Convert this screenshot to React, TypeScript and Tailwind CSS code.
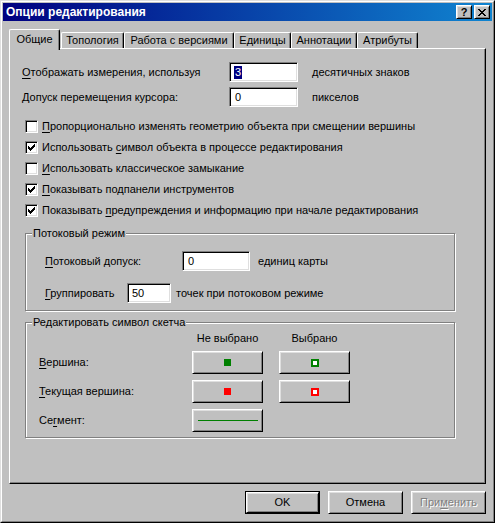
import React from "react";

const raised =
  "border border-t-white border-l-white border-r-black border-b-black shadow-[inset_1px_1px_0_#dfdfdf,inset_-1px_-1px_0_#808080] bg-[#c0c0c0]";
const sunken =
  "border border-t-[#808080] border-l-[#808080] border-r-white border-b-white shadow-[inset_1px_1px_0_#000,inset_-1px_-1px_0_#dfdfdf] bg-white";

function U({ children }: { children: React.ReactNode }) {
  return <span className="underline underline-offset-[2px] decoration-1">{children}</span>;
}

function CheckMark() {
  const r: [number, number, number][] = [
    [6, 0, 1],
    [5, 1, 2],
    [0, 2, 1],
    [4, 2, 3],
    [0, 3, 2],
    [3, 3, 3],
    [0, 4, 5],
    [1, 5, 3],
    [2, 6, 1],
  ];
  return (
    <svg
      className="absolute left-[2px] top-[2px]"
      width="7"
      height="7"
      viewBox="0 0 7 7"
      shapeRendering="crispEdges"
    >
      {r.map(([x, y, w], i) => (
        <rect key={i} x={x} y={y} width={w} height={1} fill="#000" />
      ))}
    </svg>
  );
}

function CloseGlyph() {
  const rows: [number, number][][] = [
    [[0, 2], [6, 2]],
    [[1, 2], [5, 2]],
    [[2, 4]],
    [[3, 2]],
    [[2, 4]],
    [[1, 2], [5, 2]],
    [[0, 2], [6, 2]],
  ];
  return (
    <svg width="8" height="7" viewBox="0 0 8 7" shapeRendering="crispEdges">
      {rows.map((row, y) =>
        row.map(([x, w], i) => <rect key={`${y}-${i}`} x={x} y={y} width={w} height={1} fill="#000" />)
      )}
    </svg>
  );
}

function Check({ checked, children }: { checked?: boolean; children: React.ReactNode }) {
  return (
    <div className="flex h-[21px] items-center">
      <div className={`relative h-[13px] w-[13px] ${sunken}`}>{checked && <CheckMark />}</div>
      <span className="ml-[4px] whitespace-nowrap">{children}</span>
    </div>
  );
}

function Group({
  title,
  className,
  children,
}: {
  title: string;
  className: string;
  children: React.ReactNode;
}) {
  return (
    <div
      className={`relative border border-[#808080] shadow-[inset_1px_1px_0_#fff,1px_1px_0_#fff] ${className}`}
    >
      <span className="absolute left-[6px] top-[-8px] bg-[#c0c0c0] px-[1px] leading-[14px] whitespace-nowrap">
        {title}
      </span>
      {children}
    </div>
  );
}

function Tab({ w, children }: { w: string; children: React.ReactNode }) {
  return (
    <div
      className={`flex h-[16px] items-center justify-center rounded-t-[2px] border-t border-l border-r border-t-white border-l-white border-r-black shadow-[inset_-1px_0_0_#808080] whitespace-nowrap ${w}`}
    >
      {children}
    </div>
  );
}

export default function App() {
  return (
    <div className="h-[523px] w-[495px] select-none border border-t-[#dfdfdf] border-l-[#dfdfdf] border-r-black border-b-black font-['Liberation_Sans',Arial,sans-serif] text-[11px] leading-[13px] text-black">
      <div className="flex h-full flex-col border border-t-white border-l-white border-r-[#808080] border-b-[#808080] bg-[#c0c0c0] p-px">
        {/* Title bar */}
        <div className="flex h-[18px] items-center bg-[linear-gradient(to_right,#000080,#1084d0)] pl-[3px] pr-[2px]">
          <span className="flex-1 text-[12px] font-bold text-white">Опции редактирования</span>
          <div className={`flex h-[14px] w-[16px] items-center justify-center text-[11px] font-bold leading-none ${raised}`}>
            ?
          </div>
          <div className={`ml-[2px] flex h-[14px] w-[16px] items-center justify-center ${raised}`}>
            <CloseGlyph />
          </div>
        </div>

        <div className="px-[6px] pt-[8px]">
          {/* Tabs */}
          <div className="flex h-[19px] items-end">
            <div className="relative z-10 mb-[-2px] flex h-[21px] w-[51px] items-start justify-center rounded-t-[2px] border-t border-l border-r border-t-white border-l-white border-r-black bg-[#c0c0c0] pt-[3px] shadow-[inset_-1px_0_0_#808080]">
              Общие
            </div>
            <div className="w-[1px]" />
            <Tab w="w-[63px]">Топология</Tab>
            <Tab w="w-[110px]">Работа с версиями</Tab>
            <Tab w="w-[57px]">Единицы</Tab>
            <Tab w="w-[66px]">Аннотации</Tab>
            <Tab w="w-[61px]">Атрибуты</Tab>
          </div>

          {/* Panel */}
          <div className="relative h-[436px] border border-t-white border-l-white border-r-black border-b-black shadow-[inset_-1px_-1px_0_#808080]">
            <div className="pl-[12px] pt-[13px]">
              <div className="flex h-[20px] items-center">
                <span className="w-[207px] whitespace-nowrap">
                  <U>О</U>тображать измерения, используя
                </span>
                <div className={`flex h-[20px] w-[69px] items-center pl-[4px] ${sunken}`}>
                  <span className="bg-[#000080] px-[1px] text-white">3</span>
                </div>
                <span className="ml-[14px] whitespace-nowrap">десятичных знаков</span>
              </div>
              <div className="mt-[5px] flex h-[20px] items-center">
                <span className="w-[207px] whitespace-nowrap">
                  <U>Д</U>опуск перемещения курсора:
                </span>
                <div className={`flex h-[20px] w-[69px] items-center pl-[5px] ${sunken}`}>0</div>
                <span className="ml-[14px] whitespace-nowrap">пикселов</span>
              </div>
            </div>

            <div className="mt-[9px] pl-[15px]">
              <Check>
                <U>П</U>ропорционально изменять геометрию объекта при смещении вершины
              </Check>
              <Check checked>
                Использовать <U>с</U>имвол объекта в процессе редактирования
              </Check>
              <Check>
                <U>И</U>спользовать классическое замыкание
              </Check>
              <Check checked>
                <U>П</U>оказывать подпанели инструментов
              </Check>
              <Check checked>
                Показывать <U>п</U>редупреждения и информацию при начале редактирования
              </Check>
            </div>

            <Group title="Потоковый режим" className="ml-[15px] mt-[12px] h-[78px] w-[430px]">
              <div className="mt-[17px] flex h-[20px] items-center pl-[19px]">
                <span className="w-[137px] whitespace-nowrap">
                  <U>П</U>отоковый допуск:
                </span>
                <div className={`flex h-[20px] w-[68px] items-center pl-[5px] ${sunken}`}>0</div>
                <span className="ml-[8px] whitespace-nowrap">единиц карты</span>
              </div>
              <div className="mt-[12px] flex h-[20px] items-center pl-[19px]">
                <span className="w-[82px] whitespace-nowrap">
                  <U>Г</U>руппировать
                </span>
                <div className={`flex h-[20px] w-[44px] items-center pl-[4px] ${sunken}`}>50</div>
                <span className="ml-[5px] whitespace-nowrap">точек при потоковом режиме</span>
              </div>
            </Group>

            <Group title="Редактировать символ скетча" className="ml-[15px] mt-[11px] h-[116px] w-[430px]">
              <div className="mt-[7px] flex h-[16px] items-center pl-[166px]">
                <span className="w-[71px] text-center">Не выбрано</span>
                <span className="ml-[16px] w-[71px] text-center">Выбрано</span>
              </div>
              <div className="mt-[5px] flex flex-col gap-[6px] pl-[13px]">
                <div className="flex h-[23px] items-center">
                  <span className="w-[153px]">
                    <U>В</U>ершина:
                  </span>
                  <div className={`flex h-[23px] w-[71px] items-center justify-center ${raised}`}>
                    <div className="h-[7px] w-[7px] bg-[#008000]" />
                  </div>
                  <div className={`ml-[16px] flex h-[23px] w-[71px] items-center justify-center ${raised}`}>
                    <div className="h-[8px] w-[8px] border-2 border-[#008000] bg-white" />
                  </div>
                </div>
                <div className="flex h-[23px] items-center">
                  <span className="w-[153px]">
                    <U>Т</U>екущая вершина:
                  </span>
                  <div className={`flex h-[23px] w-[71px] items-center justify-center ${raised}`}>
                    <div className="h-[7px] w-[7px] bg-[#ff0000]" />
                  </div>
                  <div className={`ml-[16px] flex h-[23px] w-[71px] items-center justify-center ${raised}`}>
                    <div className="h-[8px] w-[8px] border-2 border-[#ff0000] bg-white" />
                  </div>
                </div>
                <div className="flex h-[23px] items-center">
                  <span className="w-[153px]">
                    Се<U>г</U>мент:
                  </span>
                  <div className={`flex h-[23px] w-[71px] items-center justify-center ${raised}`}>
                    <div className="h-px w-[60px] bg-[#008000]" />
                  </div>
                </div>
              </div>
            </Group>
          </div>
        </div>

        {/* Dialog buttons */}
        <div className="flex justify-end gap-[8px] pr-[6px] pt-[7px]">
          <div className="h-[23px] w-[75px] border border-black">
            <div className={`flex h-full w-full items-center justify-center ${raised}`}>OK</div>
          </div>
          <div className={`flex h-[23px] w-[75px] items-center justify-center ${raised}`}>Отмена</div>
          <div
            className={`flex h-[23px] w-[75px] items-center justify-center text-[#808080] [text-shadow:1px_1px_0_#fff] ${raised}`}
          >
            При<U>м</U>енить
          </div>
        </div>
      </div>
    </div>
  );
}
